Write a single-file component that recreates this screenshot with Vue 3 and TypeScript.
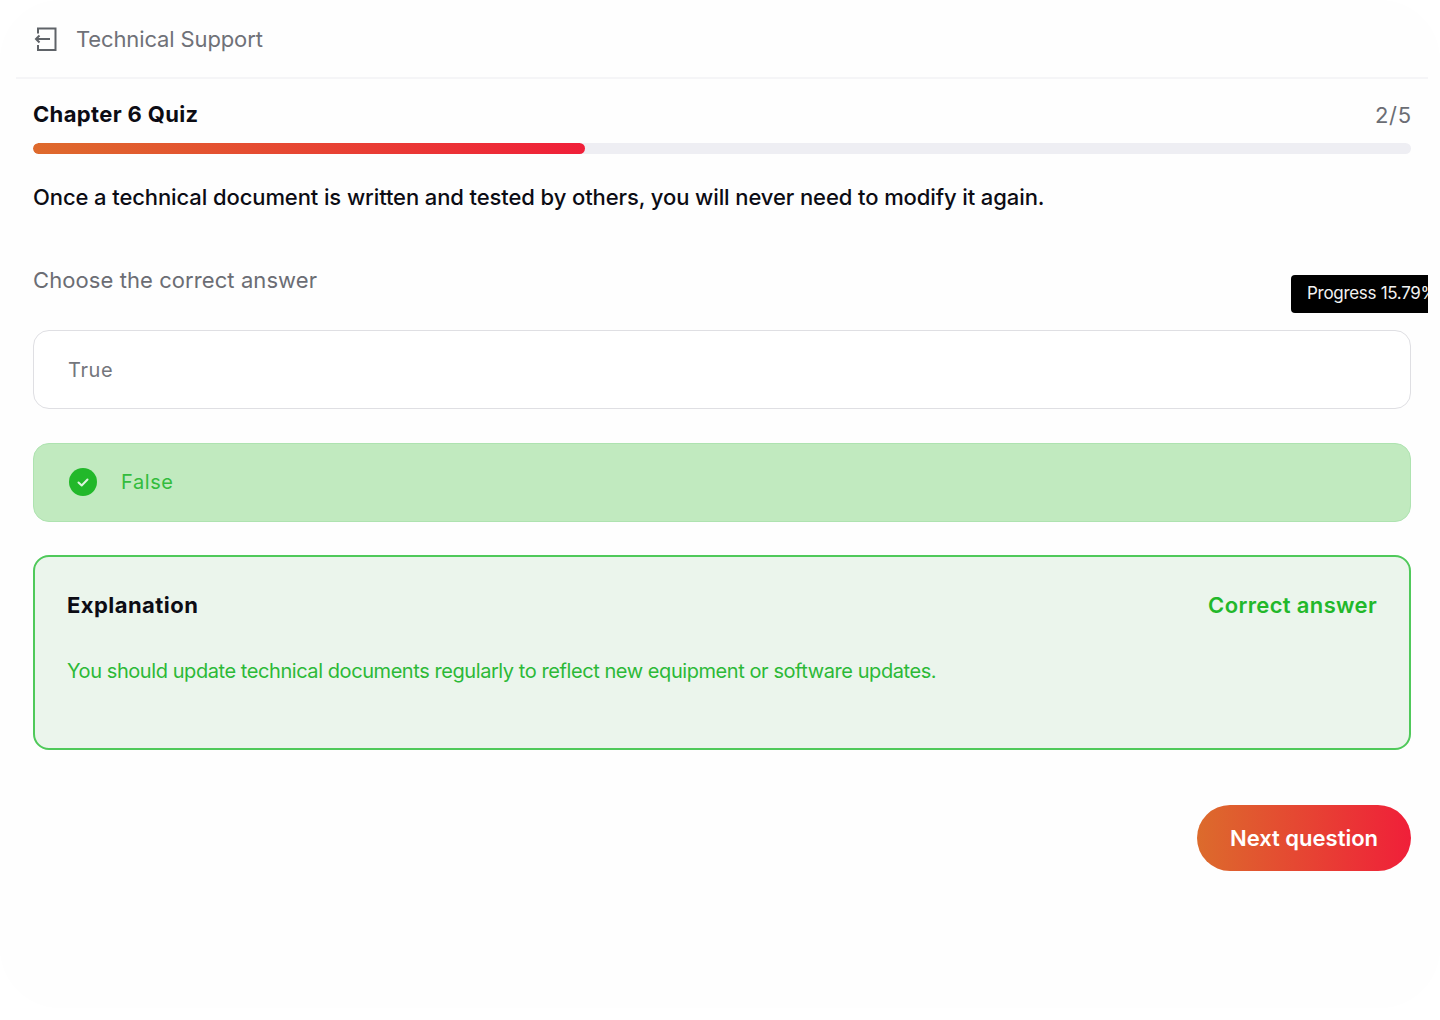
<template>
  <div class="page">
    <div class="card">
      <div class="panel">
        <header class="top">
          <svg class="exit" width="24" height="24" viewBox="0 0 24 24" fill="none" stroke="#5f6368" stroke-width="2">
            <path d="M5 6.5V1.5H22.5V23H5V18" />
            <path d="M17 12H3M6.5 8.5L3 12L6.5 15.5" />
          </svg>
          <span class="course">Technical Support</span>
        </header>

        <section class="body">
          <div class="title-row">
            <h1>{{ quiz.title }}</h1>
            <span class="count">{{ quiz.current }}/{{ quiz.total }}</span>
          </div>
          <div class="track">
            <div class="fill" :style="{ width: fillWidth }"></div>
          </div>

          <p class="question">{{ quiz.question }}</p>
          <p class="hint">Choose the correct answer</p>

          <div v-for="opt in quiz.options" :key="opt.label" class="option" :class="{ correct: opt.correct }">
            <svg v-if="opt.correct" class="tick" width="28" height="28" viewBox="0 0 28 28">
              <circle cx="14" cy="14" r="14" fill="#22b82a" />
              <path d="M9.5 14.5L12.7 17.5L18.5 11.5" fill="none" stroke="#dff5df" stroke-width="2" stroke-linecap="round" stroke-linejoin="round" />
            </svg>
            <span>{{ opt.label }}</span>
          </div>

          <div class="explain">
            <div class="explain-head">
              <h2>Explanation</h2>
              <span class="verdict">Correct answer</span>
            </div>
            <p>{{ quiz.explanation }}</p>
          </div>

          <div class="actions">
            <button class="next">Next question</button>
          </div>
        </section>

        <div class="tooltip">Progress 15.79%</div>
      </div>
    </div>
  </div>
</template>

<script setup lang="ts">
import { computed } from 'vue'

const quiz = {
  title: 'Chapter 6 Quiz',
  current: 2,
  total: 5,
  progress: 40.05,
  question: 'Once a technical document is written and tested by others, you will never need to modify it again.',
  options: [
    { label: 'True', correct: false },
    { label: 'False', correct: true }
  ],
  explanation: 'You should update technical documents regularly to reflect new equipment or software updates.'
}

const fillWidth = computed(() => `${quiz.progress}%`)
</script>

<style>
html,
body {
  margin: 0;
  background: #fff;
}
</style>

<style scoped>
.page {
  width: 1440px;
  height: 1020px;
  overflow: hidden;
  background: #fff;
  font-family: Inter, "Liberation Sans", sans-serif;
}

.card {
  height: 1008px;
  padding: 0 12px 0 16px;
  border-radius: 60px;
  background: #fefefe;
}

.panel {
  position: relative;
  height: 100%;
  overflow: hidden;
}

.top {
  display: flex;
  align-items: center;
  gap: 19px;
  height: 77px;
  padding-left: 17px;
  border-bottom: 2px solid #f5f5f7;
}

.exit {
  flex: none;
}

.course {
  font-size: 22px;
  color: #6f7178;
  letter-spacing: -0.13px;
}

.body {
  padding: 0 17px;
}

.title-row {
  display: flex;
  justify-content: space-between;
  align-items: center;
  height: 32px;
  margin-top: 19px;
}

h1 {
  margin: 0;
  font-size: 22px;
  font-weight: 700;
  color: #0c0c14;
  letter-spacing: 0.35px;
}

.count {
  font-size: 22px;
  color: #6b6d74;
  letter-spacing: 0.8px;
  margin: 1px -1px 0 0;
}

.track {
  height: 11px;
  margin-top: 13px;
  border-radius: 6px;
  background: #eeeef3;
  overflow: hidden;
}

.fill {
  height: 100%;
  border-radius: 6px;
  background: linear-gradient(90deg, #de6a2c, #f01f39);
}

.question {
  margin: 28px 0 0;
  font-size: 22px;
  line-height: 30px;
  font-weight: 500;
  color: #0c0c14;
  letter-spacing: -0.1px;
}

.hint {
  margin: 53px 0 0;
  font-size: 22px;
  line-height: 30px;
  color: #6b6d74;
  letter-spacing: 0.08px;
}

.option {
  display: flex;
  align-items: center;
  gap: 24px;
  box-sizing: border-box;
  height: 79px;
  margin-top: 34px;
  padding: 0 34px;
  border: 1.5px solid #dfdfe3;
  border-radius: 16px;
  background: #fff;
  font-size: 20px;
  letter-spacing: 0.6px;
  color: #74767c;
}

.hint + .option {
  margin-top: 35px;
}

.option.correct {
  border-color: #aee3b0;
  background: #c1eabf;
  color: #33bc3d;
}

.option.correct span {
  margin-top: -2px;
}

.tick {
  flex: none;
  margin: -1px 0 0 1px;
}

.explain {
  box-sizing: border-box;
  height: 195px;
  margin-top: 33px;
  padding: 33px 32px;
  border: 2px solid #4fc95a;
  border-radius: 16px;
  background: #ebf5ec;
}

.explain-head {
  display: flex;
  justify-content: space-between;
  align-items: center;
  height: 30px;
}

h2 {
  margin: 0;
  font-size: 22px;
  font-weight: 700;
  color: #0c0c14;
  letter-spacing: 0.45px;
}

.verdict {
  font-size: 22px;
  font-weight: 600;
  color: #22b82a;
  letter-spacing: 0.35px;
}

.explain p {
  margin: 37px 0 0;
  font-size: 20px;
  line-height: 28px;
  color: #2cb937;
  letter-spacing: -0.43px;
}

.actions {
  display: flex;
  justify-content: flex-end;
  margin-top: 55px;
}

.next {
  width: 214px;
  height: 66px;
  border: 0;
  border-radius: 33px;
  background: linear-gradient(90deg, #dc6b2c, #f01f39);
  color: #fff;
  font: 600 22px Inter, "Liberation Sans", sans-serif;
}

.tooltip {
  position: absolute;
  top: 275px;
  left: 1275px;
  box-sizing: border-box;
  width: 160px;
  height: 38px;
  padding-left: 16px;
  border-radius: 4px;
  background: #000;
  color: #f2f2f2;
  font-size: 17px;
  line-height: 37px;
  letter-spacing: -0.3px;
  white-space: nowrap;
}
</style>
